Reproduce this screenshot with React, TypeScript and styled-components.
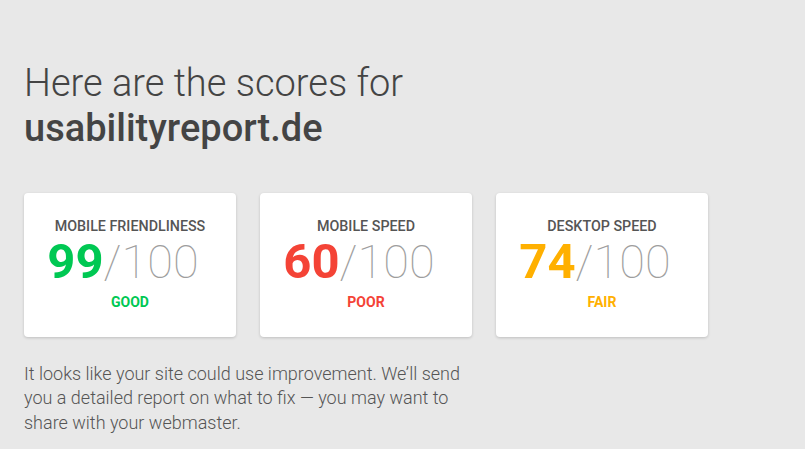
import React from "react";
import styled, { createGlobalStyle } from "styled-components";

const Global = createGlobalStyle`
  html, body { margin: 0; padding: 0; background: #e8e8e8; }
  body { font-family: Roboto, "Noto Sans", sans-serif; color: #444; }
`;

const Page = styled.main`
  padding: 61px 24px 0 24px;
  display: flex;
  flex-direction: column;
`;

const Heading = styled.h1`
  margin: 0;
  font-size: 38px;
  line-height: 45px;
  font-weight: 300;
  color: #444;
`;

const Domain = styled.span`
  display: block;
  font-weight: 500;
  color: #444;
`;

const Cards = styled.div`
  display: flex;
  gap: 24px;
  margin-top: 42px;
`;

const Card = styled.section`
  width: 212px;
  height: 144px;
  box-sizing: border-box;
  background: #fff;
  border-radius: 4px;
  box-shadow: 0 1px 3px rgba(0, 0, 0, 0.18);
  display: flex;
  flex-direction: column;
  align-items: center;
  padding-top: 24px;
`;

const Label = styled.div`
  font-size: 14.3px;
  font-weight: 500;
  color: #555;
  line-height: 18px;
`;

const Score = styled.div`
  display: flex;
  align-items: baseline;
  line-height: 52px;
  margin-top: 1px;
  padding-right: 14px;
`;

const Value = styled.span<{ $color: string }>`
  font-size: 49px;
  font-weight: 700;
  color: ${(p) => p.$color};
`;

const Max = styled.span`
  font-size: 47px;
  font-weight: 100;
  color: #9e9e9e;
`;

const Status = styled.div<{ $color: string }>`
  font-size: 14px;
  font-weight: 700;
  line-height: 18px;
  color: ${(p) => p.$color};
  margin-top: 5px;
`;

const Text = styled.p`
  margin: 25px 0 0 0;
  width: 440px;
  font-size: 18px;
  line-height: 24.4px;
  font-weight: 300;
  color: #555;
`;

const scores = [
  { label: "MOBILE FRIENDLINESS", value: 99, status: "GOOD", color: "#00c853" },
  { label: "MOBILE SPEED", value: 60, status: "POOR", color: "#f44336" },
  { label: "DESKTOP SPEED", value: 74, status: "FAIR", color: "#ffb000" },
];

export default function App() {
  return (
    <>
      <Global />
      <Page>
        <Heading>
          Here are the scores for
          <Domain>usabilityreport.de</Domain>
        </Heading>
        <Cards>
          {scores.map((s) => (
            <Card key={s.label}>
              <Label>{s.label}</Label>
              <Score>
                <Value $color={s.color}>{s.value}</Value>
                <Max>/100</Max>
              </Score>
              <Status $color={s.color}>{s.status}</Status>
            </Card>
          ))}
        </Cards>
        <Text>
          It looks like your site could use improvement. We’ll send you a detailed report on what to fix — you may want to share with your webmaster.
        </Text>
      </Page>
    </>
  );
}
